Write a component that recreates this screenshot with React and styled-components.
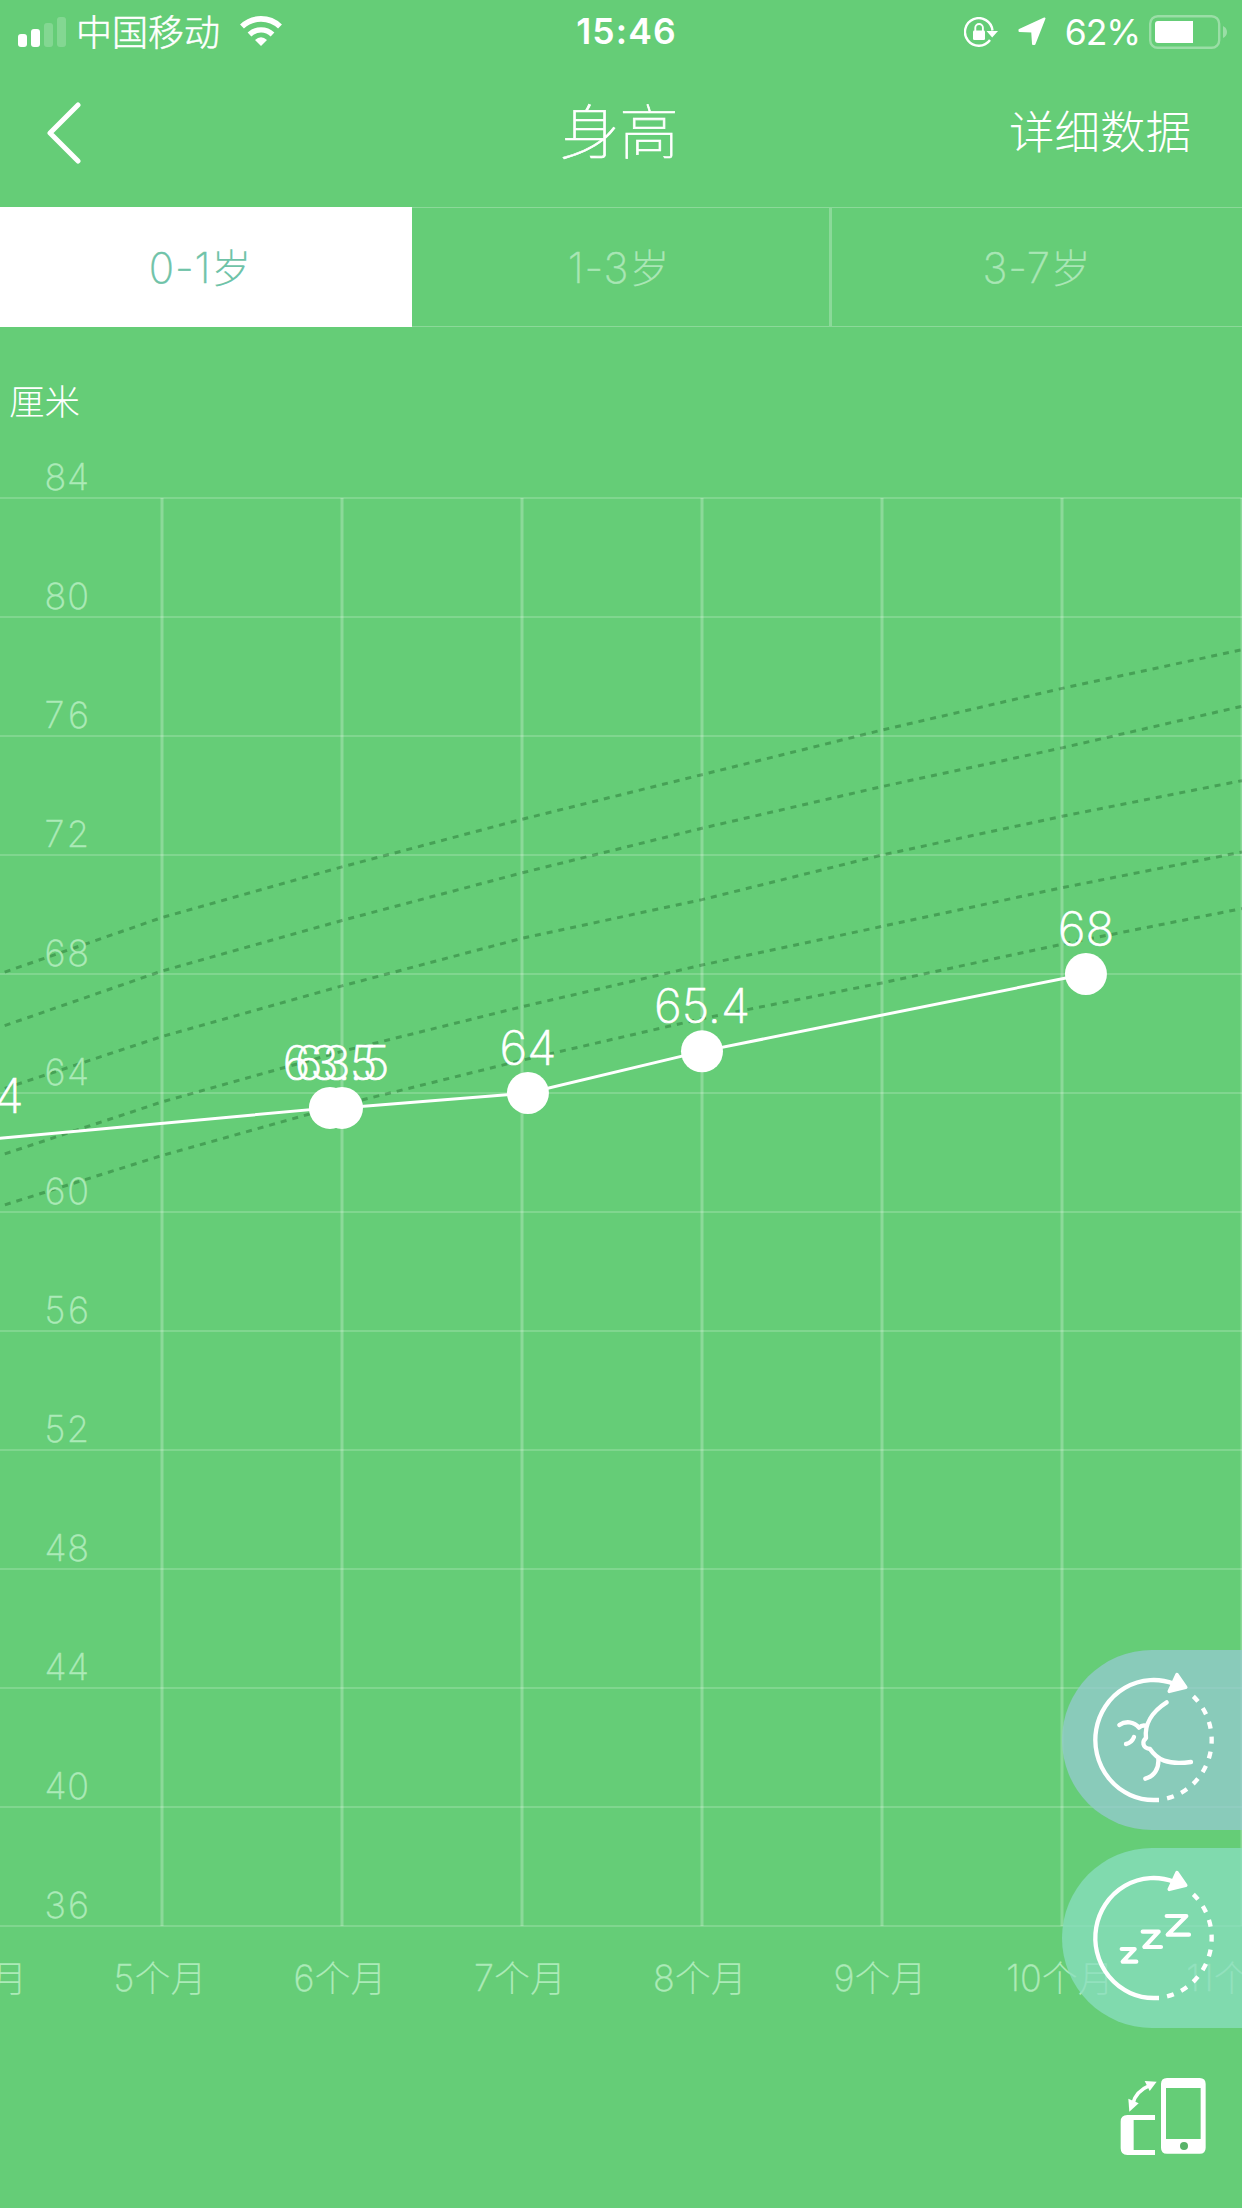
import styled, { createGlobalStyle } from "styled-components";

const GlobalStyle = createGlobalStyle`
  body {
    margin: 0;
    background: #65cd77;
  }
`;

const Screen = styled.div`
  position: relative;
  display: flex;
  flex-direction: column;
  width: 1242px;
  height: 2208px;
  overflow: hidden;
  background: #65cd77;
  color: #fff;
  font-family: Inter, "Noto Sans CJK SC", sans-serif;
`;

const StatusBar = styled.div`
  display: grid;
  grid-template-columns: 1fr auto 1fr;
  align-items: center;
  height: 60px;
  padding: 0 14px 0 18px;
  line-height: 60px;
`;

const StatusGroup = styled.div`
  display: flex;
  align-items: center;
  justify-content: ${(p) => (p.$end ? "flex-end" : "flex-start")};
`;

const Carrier = styled.span`
  height: 64px;
  margin: 0 20px 0 9px;
  font-size: 36px;
  font-family: "Noto Sans CJK SC", sans-serif;
  font-weight: 300;
  -webkit-text-stroke: 0.5px #fff;
`;

const Time = styled.span`
  padding-left: 7px;
  font-size: 35.5px;
  font-weight: 600;
  letter-spacing: 1.1px;
`;

const Percent = styled.span`
  margin: 0 9px 0 19px;
  padding-top: 1px;
  font-size: 35.5px;
  font-weight: 400;
  letter-spacing: -1.1px;
`;

const NavBar = styled.div`
  display: grid;
  grid-template-columns: 1fr auto 1fr;
  grid-template-rows: 137px;
  align-items: center;
  height: 147px;
  padding: 0 51px 0 45px;
  box-sizing: border-box;
  font-family: "Noto Sans CJK SC", sans-serif;
`;

const Title = styled.h1`
  margin: 0 0 0 3px;
  font-size: 59px;
  line-height: 137px;
  font-weight: 100;
  -webkit-text-stroke: 0.7px #fff;
`;

const DetailLink = styled.a`
  justify-self: end;
  padding-top: 2px;
  font-size: 45.5px;
  line-height: 137px;
  font-weight: 300;
`;

const Tabs = styled.div`
  display: grid;
  grid-template-columns: 412px 417px 1fr;
  height: 120px;
`;

const Tab = styled.div`
  box-sizing: border-box;
  display: flex;
  align-items: center;
  justify-content: center;
  padding-right: ${(p) => p.$inset}px;
  border: 0 solid rgba(255, 255, 255, 0.25);
  border-width: ${(p) => (p.$active ? 0 : "1px 0")};
  border-left-width: ${(p) => (p.$divided ? "3px" : 0)};
  background: ${(p) => (p.$active ? "#fff" : "transparent")};
  color: ${(p) => (p.$active ? "#6fc3a8" : "#a9e6b5")};
  font-size: 42px;
  font-weight: 200;
  letter-spacing: 0.8px;
  -webkit-text-stroke: 0.4px currentColor;
`;

const TabUnit = styled.span`
  padding-bottom: 3px;
  font-size: 40px;
  font-weight: 300;
  -webkit-text-stroke: 0;
`;

const Unit = styled.div`
  height: 113px;
  padding-left: 9px;
  font-family: "Noto Sans CJK SC", sans-serif;
  font-size: 35.5px;
  font-weight: 300;
  line-height: 145px;
`;

const Plot = styled.svg`
  display: block;
  flex: 1;

  .grid-y {
    stroke: rgba(255, 255, 255, 0.18);
    stroke-width: 2;
  }
  .grid-x {
    stroke: rgba(255, 255, 255, 0.25);
    stroke-width: 3;
  }
  .axis {
    fill: #aceab8;
    stroke: #aceab8;
    stroke-width: 0.4;
    font-size: 36px;
    font-weight: 200;
  }
  .month {
    stroke: none;
    font-weight: 300;
  }
  .percentile {
    fill: none;
    stroke: rgba(0, 60, 10, 0.3);
    stroke-width: 3;
    stroke-dasharray: 6 6;
  }
  .growth {
    fill: none;
    stroke: #fff;
    stroke-width: 3;
  }
  .value {
    fill: #fff;
    stroke: #fff;
    stroke-width: 0.7;
    font-size: 47.5px;
    font-weight: 200;
    text-anchor: middle;
  }
`;

const FloatStack = styled.div`
  position: absolute;
  right: 0;
  top: 1650px;
  display: flex;
  flex-direction: column;
  gap: 18px;
`;

const FloatButton = styled.button`
  display: block;
  width: 180px;
  height: 180px;
  padding: 0;
  border: 0;
  border-radius: 90px 0 0 90px;
  background: ${(p) => p.$tint};
`;

const RotateButton = styled.button`
  position: absolute;
  left: 1090px;
  top: 2050px;
  padding: 0;
  border: 0;
  background: none;
  line-height: 0;
`;

const X_START = -18;
const MONTH_WIDTH = 180;
const MONTHS = [4, 5, 6, 7, 8, 9, 10, 11];
const TICKS = [84, 80, 76, 72, 68, 64, 60, 56, 52, 48, 44, 40, 36];

const PERCENTILES = [
  [67.8, 69.9, 71.6, 73.2, 74.7, 76.2, 77.6, 78.9],
  [66.0, 68.1, 69.8, 71.4, 72.9, 74.3, 75.6, 77.0],
  [63.9, 65.9, 67.6, 69.2, 70.5, 72.0, 73.3, 74.5],
  [61.7, 63.7, 65.4, 66.9, 68.3, 69.6, 70.9, 72.1],
  [60.0, 61.9, 63.6, 65.1, 66.5, 67.7, 69.0, 70.2],
];

const RECORDS = [
  { month: 3.955, cm: 62.4 },
  { month: 5.933, cm: 63.5 },
  { month: 6, cm: 63.5 },
  { month: 7.033, cm: 64 },
  { month: 8, cm: 65.4 },
  { month: 10.133, cm: 68 },
];

const toX = (month) => X_START + (month - 4) * MONTH_WIDTH;
const toY = (cm) => 58 + (84 - cm) * 29.75;

const Chart = () => (
  <Plot width="1242" height="1768" viewBox="0 0 1242 1768">
    {TICKS.map((t) => (
      <line key={t} className="grid-y" x1="0" x2="1242" y1={toY(t)} y2={toY(t)} />
    ))}
    {MONTHS.map((m) => (
      <line key={m} className="grid-x" x1={toX(m)} x2={toX(m)} y1={toY(84)} y2={toY(36)} />
    ))}
    {PERCENTILES.map((row, i) => (
      <polyline
        key={i}
        className="percentile"
        points={row.map((cm, j) => `${toX(MONTHS[j])},${toY(cm)}`).join(" ")}
      />
    ))}
    {TICKS.map((t) => (
      <text key={t} className="axis" x="44.5" y={toY(t) - 8} textLength="44.5">
        {t}
      </text>
    ))}
    {MONTHS.map((m) => (
      <text key={m} className="axis" x={toX(m) - (m > 10 ? 6 : 2)} y="1551" textAnchor="middle">
        {m}
        <tspan className="month" dy="1">
          个月
        </tspan>
      </text>
    ))}
    <polyline
      className="growth"
      points={RECORDS.map((r) => `${toX(r.month)},${toY(r.cm)}`).join(" ")}
    />
    {RECORDS.map((r) => (
      <g key={r.month}>
        <circle cx={toX(r.month)} cy={toY(r.cm)} r="21" fill="#fff" />
        <text className="value" x={toX(r.month)} y={toY(r.cm) - 28}>
          {r.cm}
        </text>
      </g>
    ))}
  </Plot>
);

const SignalIcon = () => (
  <svg width="49" height="32" viewBox="0 0 49 32" fill="#fff">
    <rect x="0" y="18" width="9" height="13" rx="3" />
    <rect x="13" y="13" width="9" height="18" rx="3" />
    <rect x="26" y="7" width="9" height="24" rx="3" opacity="0.2" />
    <rect x="39" y="1" width="9" height="30" rx="3" opacity="0.2" />
  </svg>
);

const WifiIcon = () => (
  <svg width="42" height="32" viewBox="0 0 42 32">
    <g fill="none" stroke="#fff">
      <path d="M2 10.5 A27.5 27.5 0 0 1 40 10.5" strokeWidth="5.6" />
      <path d="M9.5 18.5 A16.5 16.5 0 0 1 32.5 18.5" strokeWidth="5.4" />
    </g>
    <path d="M21 30 L15 24 Q21 18.5 27 24 Z" fill="#fff" />
  </svg>
);

const LockIcon = () => (
  <svg width="35" height="30" viewBox="0 0 35 30">
    <path d="M28.5 13.5 A13.8 13.8 0 1 0 26 23" fill="none" stroke="#fff" strokeWidth="2.4" />
    <path d="M22.5 14 H34 L28.2 20.6 Z" fill="#fff" />
    <rect x="9" y="13.5" width="12" height="9.5" rx="1.3" fill="#fff" />
    <path d="M11.3 14 V10.8 a3.8 3.8 0 0 1 7.6 0 V14" fill="none" stroke="#fff" strokeWidth="1.9" />
  </svg>
);

const LocationIcon = () => (
  <svg width="47" height="31" viewBox="-19 0 47 31">
    <path
      d="M1.5 13 L26.5 1.5 L16.5 27 H15 L14.2 14.5 L1.5 14 Z"
      fill="#fff"
      stroke="#fff"
      strokeWidth="2"
      strokeLinejoin="round"
    />
  </svg>
);

const BatteryIcon = () => (
  <svg width="79" height="34" viewBox="0 0 79 34">
    <rect x="1.2" y="1.2" width="69" height="31.6" rx="7.5" fill="none" stroke="#fff" strokeOpacity="0.35" strokeWidth="2.4" />
    <path d="M44 6 H9 a3 3 0 0 0 -3 3 V25 a3 3 0 0 0 3 3 H44 Z" fill="#fff" />
    <path d="M74 11 Q78 13 78 17 Q78 21 74 23 Z" fill="#fff" opacity="0.35" />
  </svg>
);

const BackIcon = () => (
  <svg width="36" height="74" viewBox="0 0 36 74">
    <path
      d="M33 13 L5 41 L33 69"
      fill="none"
      stroke="#fff"
      strokeWidth="5"
      strokeLinecap="round"
      strokeLinejoin="round"
    />
  </svg>
);

// solid arc with an arrow head, closed by a dashed arc
const CycleIcon = ({ children }) => (
  <svg
    width="180"
    height="180"
    viewBox="0 0 540 540"
    fill="none"
    stroke="#fff"
    strokeWidth="13"
    strokeLinejoin="round"
  >
    <path d="M291 450 H275 A175 180 0 1 1 336 101.3" />
    <path d="M345 74 L371 112 L322 124 Z" fill="#fff" strokeWidth="11" />
    <path d="M394 139 A175 180 0 0 1 306 447" strokeDasharray="21 24.2" />
    {children}
  </svg>
);

const BabyIcon = () => (
  <CycleIcon>
    <g strokeLinecap="round">
      <path d="M172 225 C190 212 216 214 231 233 Q239 225 250 227" />
      <path d="M314 157 C270 185 247 223 252 264 C240 274 240 294 264 297 C285 328 315 346 387 336" />
      <path d="M289 328 C291 355 277 379 250 386" />
      <path d="M216 261 Q209 279 192 282" />
    </g>
  </CycleIcon>
);

const SleepIcon = () => (
  <CycleIcon>
    <g strokeLinecap="round" strokeWidth="12.5">
      <path d="M314 204 H373 L317 260 H381" />
      <path d="M242 251 H290 L247 297 H297" />
      <path d="M179 303 H218 L182 341 H223" />
    </g>
  </CycleIcon>
);

const RotateIcon = () => (
  <svg width="152" height="140" viewBox="0 0 456 420" fill="#fff">
    <path
      fillRule="evenodd"
      d="M231 84 H329 Q347 84 347 102 V293 Q347 311 329 311 H231 Q213 311 213 293 V102 Q213 84 231 84 Z M228 114 V267 H332 V114 Z"
    />
    <circle cx="282" cy="288" r="12" fill="#58b369" />
    <path d="M195 195 H112 Q92 195 92 215 V295 Q92 315 112 315 H195 V300 H131 V210 H195 Z" />
    <path d="M128 162 Q137 124 178 107" fill="none" stroke="#fff" strokeWidth="11" />
    <path d="M200 95 L164 93 L179 123 Z" />
    <path d="M118 185 L115 146 L146 160 Z" />
  </svg>
);

export default function App() {
  return (
    <Screen>
      <GlobalStyle />
      <StatusBar>
        <StatusGroup>
          <SignalIcon />
          <Carrier>中国移动</Carrier>
          <WifiIcon />
        </StatusGroup>
        <Time>15:46</Time>
        <StatusGroup $end>
          <LockIcon />
          <LocationIcon />
          <Percent>62%</Percent>
          <BatteryIcon />
        </StatusGroup>
      </StatusBar>
      <NavBar>
        <BackIcon />
        <Title>身高</Title>
        <DetailLink>详细数据</DetailLink>
      </NavBar>
      <Tabs>
        <Tab $active $inset={11}>
          0-1<TabUnit>岁</TabUnit>
        </Tab>
        <Tab $inset={3}>
          1-3<TabUnit>岁</TabUnit>
        </Tab>
        <Tab $divided $inset={0}>
          3-7<TabUnit>岁</TabUnit>
        </Tab>
      </Tabs>
      <Unit>厘米</Unit>
      <Chart />
      <FloatStack>
        <FloatButton $tint="rgba(150, 201, 208, 0.75)">
          <BabyIcon />
        </FloatButton>
        <FloatButton $tint="rgba(138, 221, 192, 0.75)">
          <SleepIcon />
        </FloatButton>
      </FloatStack>
      <RotateButton>
        <RotateIcon />
      </RotateButton>
    </Screen>
  );
}
